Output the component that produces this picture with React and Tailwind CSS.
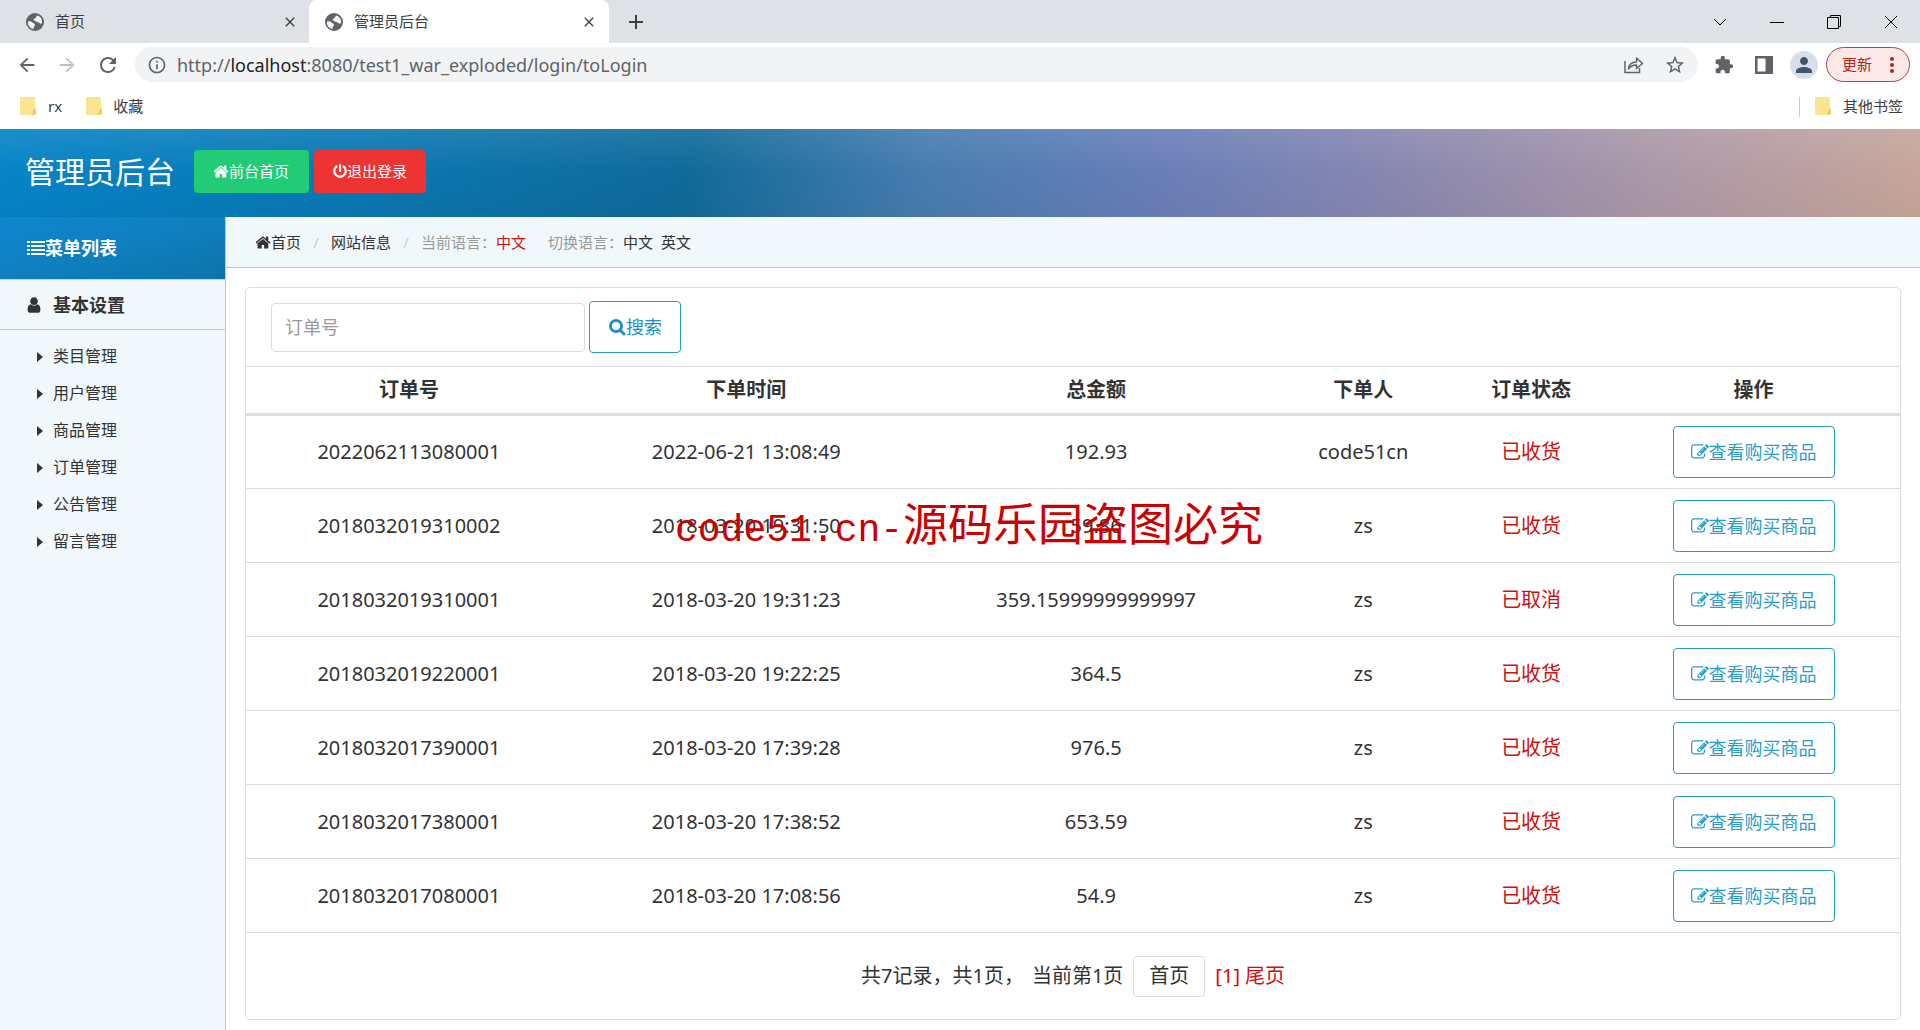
import React from "react";
import { FaPowerOff } from "react-icons/fa";
import { MdExtension, MdPerson, MdStarBorder, MdInfoOutline, MdRefresh, MdArrowBack, MdArrowForward, MdClose, MdAdd } from "react-icons/md";

const menu = ["类目管理", "用户管理", "商品管理", "订单管理", "公告管理", "留言管理"];

const columns = [
  ["订单号", "w-[19.7%]"],
  ["下单时间", "w-[21.1%]"],
  ["总金额", "w-[21.2%]"],
  ["下单人", "w-[11.1%]"],
  ["订单状态", "w-[9.2%]"],
  ["操作", "w-[17.7%]"],
];

const orders = [
  ["2022062113080001", "2022-06-21 13:08:49", "192.93", "code51cn", "已收货"],
  ["2018032019310002", "2018-03-20 19:31:50", "59.86", "zs", "已收货"],
  ["2018032019310001", "2018-03-20 19:31:23", "359.15999999999997", "zs", "已取消"],
  ["2018032019220001", "2018-03-20 19:22:25", "364.5", "zs", "已收货"],
  ["2018032017390001", "2018-03-20 17:39:28", "976.5", "zs", "已收货"],
  ["2018032017380001", "2018-03-20 17:38:52", "653.59", "zs", "已收货"],
  ["2018032017080001", "2018-03-20 17:08:56", "54.9", "zs", "已收货"],
];

function HomeIcon() {
  return (
    <svg className="size-[15px]" viewBox="96 96 1600 1600" fill="currentColor" aria-hidden="true">
      <path d="M1408 992v480q0 26-19 45t-45 19h-384v-384h-256v384h-384q-26 0-45-19t-19-45v-480q0-1 .5-3t.5-3l575-474 575 474q1 2 1 6zm223-69l-62 74q-8 9-21 11h-3q-13 0-21-7l-692-577-692 577q-12 8-24 7-13-2-21-11l-62-74q-8-10-7-23.5t11-21.5l719-599q32-26 76-26t76 26l244 204v-195q0-14 9-23t23-9h192q14 0 23 9t9 23v408l219 182q10 8 11 21.5t-7 23.5z" />
    </svg>
  );
}

function EditIcon() {
  return (
    <svg className="size-[18px]" viewBox="0 0 1792 1792" fill="currentColor" aria-hidden="true">
      <path d="M888 1184l116-116-152-152-116 116v56h96v96h56zm440-720q-16-16-33 1l-350 350q-17 17-1 33t33-1l350-350q17-17 1-33zm80 594v190q0 119-84.500 203.500t-203.500 84.500h-832q-119 0-203.500-84.500t-84.500-203.500v-832q0-119 84.500-203.500t203.500-84.500h832q63 0 117 25 15 7 18 23 3 17-9 29l-49 49q-14 14-32 8-23-6-45-6h-832q-66 0-113 47t-47 113v832q0 66 47 113t113 47h832q66 0 113-47t47-113v-126q0-13 9-22l64-64q15-15 35-7t20 29zm-96-738l288 288-672 672h-288v-288zm444 132l-92 92-288-288 92-92q28-28 68-28t68 28l152 152q28 28 28 68t-28 68z" />
    </svg>
  );
}

function UserIcon() {
  return (
    <svg className="size-4" viewBox="96 96 1600 1600" fill="currentColor" aria-hidden="true">
      <path d="M1536 1399q0 109-62.500 187t-150.500 78h-854q-88 0-150.500-78t-62.500-187q0-85 8.500-160.500t31.500-152 58.500-131 94-89 134.500-34.500q131 128 313 128t313-128q76 0 134.500 34.500t94 89 58.500 131 31.500 152 8.500 160.500zm-256-887q0 159-112.500 271.500t-271.500 112.500-271.500-112.500-112.500-271.500 112.500-271.500 271.500-112.500 271.500 112.500 112.500 271.500z" />
    </svg>
  );
}

function ListIcon() {
  return (
    <svg width="18" height="16" viewBox="0 0 18 16" fill="currentColor" aria-hidden="true">
      <path d="M0 1h3v2H0zM4 1h14v2H4zM0 5h3v2H0zM4 5h14v2H4zM0 9h3v2H0zM4 9h14v2H4zM0 13h3v2H0zM4 13h14v2H4z" />
    </svg>
  );
}

function SearchIcon() {
  return (
    <svg width="18" height="18" viewBox="0 0 18 18" fill="none" stroke="currentColor" aria-hidden="true">
      <circle cx="8" cy="8" r="5.5" strokeWidth="3" />
      <path d="M12 12l4 4" strokeWidth="3" strokeLinecap="round" />
    </svg>
  );
}

function Globe() {
  return (
    <svg width="18" height="18" viewBox="0 0 18 18" aria-hidden="true">
      <circle cx="9" cy="9" r="9" fill="#5f6368" />
      <path d="M2 8.500c2-.5 4 0 5 1.500 1 .3 2 .8 2 2s-1.500 1.500-1.500 3v1C4 15.500 1.500 12.500 2 8.500z" fill="#f3f4f6" />
      <path d="M11.500 2.500c3 1 4.800 3.500 4.600 7-.6 1.500-1.600 1.500-2.600.5-.8-1-2.500-.5-3.500-1.500-.8-1-2.500-.8-2.500-2 0-1 1.500-.8 2-1.500.8-1 .8-1.800 2-2.500z" fill="#f3f4f6" />
    </svg>
  );
}

function Folder() {
  return (
    <svg width="17" height="19" viewBox="0 0 17 19" aria-hidden="true">
      <rect x="0" y="0" width="15" height="18" rx="1" fill="#fde491" />
      <path d="M14 11l2 1v5l-2 1h-2z" fill="#f3cd5c" />
    </svg>
  );
}

function Tab({ title, active }) {
  return (
    <div className={active ? "flex w-[300px] items-center rounded-t-lg bg-white pl-4 pr-3" : "flex w-[309px] items-center pl-[26px] pr-[11px]"}>
      <Globe />
      <span className="ml-[11px] flex-1">{title}</span>
      <button aria-label="关闭标签页"><MdClose className="size-4 text-[#3c4043]" /></button>
    </div>
  );
}

function Browser() {
  return (
    <div className="text-[15px] text-[#3c4043]">
      <div className="flex h-[43px] bg-[#dee1e6]">
        <Tab title="首页" />
        <Tab title="管理员后台" active />
        <button className="ml-[15px]" aria-label="新标签页"><MdAdd className="size-6" /></button>
        <div className="ml-auto flex items-center pr-px text-black">
          <button className="flex w-[57px] justify-center" aria-label="搜索标签页">
            <svg width="14" height="14" viewBox="0 0 14 14" fill="none" stroke="currentColor"><path d="M1 4l6 6 6-6" /></svg>
          </button>
          <button className="flex w-[57px] justify-center" aria-label="最小化">
            <svg width="14" height="14" viewBox="0 0 14 14" stroke="currentColor"><path d="M0 7.5h14" /></svg>
          </button>
          <button className="flex w-[57px] justify-center" aria-label="还原">
            <svg width="14" height="14" viewBox="0 0 14 14" fill="none" stroke="currentColor"><path d="M.5 2.500h11v11H.5zM3.500 2.500v-2h10v11h-2" /></svg>
          </button>
          <button className="flex w-[57px] justify-center" aria-label="关闭">
            <svg width="14" height="14" viewBox="0 0 14 14" stroke="currentColor"><path d="M1 1l12 12M13 1L1 13" /></svg>
          </button>
        </div>
      </div>
      <div className="flex h-[45px] items-center bg-white pb-0.5 pl-4 pr-2.5">
        <button className="mr-[18px]" aria-label="后退"><MdArrowBack className="size-[22px] text-[#5f6368]" /></button>
        <button className="mr-[18px]" aria-label="前进"><MdArrowForward className="size-[22px] text-[#bdc1c6]" /></button>
        <button aria-label="重新加载"><MdRefresh className="size-6 text-[#5f6368]" /></button>
        <div className="ml-[15px] flex h-[35px] flex-1 items-center rounded-full bg-[#f1f3f4] pl-3 pr-3">
          <MdInfoOutline className="size-5 text-[#5f6368]" />
          <span className="ml-2.5 flex-1 text-lg text-[#5f6368]">
            http://<span className="text-[#202124]">localhost</span>:8080/test1_war_exploded/login/toLogin
          </span>
          <button className="mr-5" aria-label="分享">
            <svg width="20" height="20" viewBox="0 0 20 20" fill="none" stroke="#5f6368" strokeWidth="1.500">
              <path d="M1 6v11.500h14.500V13" />
              <path d="M4.500 14c.5-4.500 3-7 8-7V3l6 5.500-6 5V10c-3.500 0-6 1-8 4z" strokeLinejoin="round" />
            </svg>
          </button>
          <button aria-label="收藏"><MdStarBorder className="size-[22px] text-[#5f6368]" /></button>
        </div>
        <button className="ml-4" aria-label="扩展程序"><MdExtension className="size-5 text-[#5f6368]" /></button>
        <button className="ml-5" aria-label="侧边栏">
          <svg width="20" height="20" viewBox="0 0 20 20"><path d="M1 1h18v18H1zM3.500 3.500v13h8v-13z" fill="#5f6368" fillRule="evenodd" /></svg>
        </button>
        <button className="ml-4 flex size-7 items-center justify-center rounded-full bg-[#d9dfea]" aria-label="个人资料"><MdPerson className="size-6 text-[#44546a]" /></button>
        <button className="ml-2 flex h-[35px] items-center gap-[18px] rounded-full border border-[#b3404a] bg-[#fce8e6] pl-[15px] pr-[15px] text-[#b3261e]">
          更新
          <svg width="4" height="16" viewBox="0 0 4 16" fill="currentColor"><circle cx="2" cy="2" r="2" /><circle cx="2" cy="8" r="2" /><circle cx="2" cy="14" r="2" /></svg>
        </button>
      </div>
      <div className="flex h-[41px] items-center bg-white pb-1 pl-5 pr-[17px]">
        <a href="#rx" className="mr-6 flex items-center gap-[11px]"><Folder />rx</a>
        <a href="#fav" className="flex items-center gap-2.5"><Folder />收藏</a>
        <a href="#other" className="ml-auto flex items-center gap-[11px]"><span className="mr-1 h-5 w-px bg-[#c8cacd]" /><Folder />其他书签</a>
      </div>
    </div>
  );
}

function Sidebar() {
  return (
    <aside className="w-[226px] shrink-0 border-r border-[#b5cfd9] bg-[#f0f8fc] text-[#333]">
      <h2 className="flex h-[63px] items-center border-b border-[#a5dcf8] bg-linear-to-br from-[#1186cf] via-[#0f7fc0] to-[#0c74a8] pl-[27px] text-lg font-bold text-white">
        <ListIcon />菜单列表
      </h2>
      <h3 className="flex h-[50px] items-center gap-[11px] border-b border-[#bccbd3] pl-[26px] text-lg font-bold">
        <UserIcon />基本设置
      </h3>
      <ul className="pt-2">
        {menu.map((m) => (
          <li key={m}>
            <a href="#menu" className="flex items-center gap-2.5 pl-[37px] text-base leading-[37px]">
              <svg width="6" height="10" viewBox="0 0 6 10" fill="currentColor" aria-hidden="true"><path d="M0 0l6 5-6 5z" /></svg>
              {m}
            </a>
          </li>
        ))}
      </ul>
    </aside>
  );
}

export default function App() {
  return (
    <div className="relative flex min-h-screen flex-col bg-white font-['Noto_Sans','Noto_Sans_CJK_SC',sans-serif] text-[#333]">
      <Browser />
      <header className="flex h-[88px] items-center bg-[linear-gradient(180deg,#ffffff18,#ffffff00_50%,#00000008),linear-gradient(102deg,#0584c8_0%,#0a77b2_20%,#0f6a99_36%,#467cb0_48%,#687eb8_60%,#8a88b0_73%,#ac98a8_86%,#c8a69a_100%)] pb-1 pl-[25px]">
        <h1 className="mr-[19px] text-[30px] text-white">管理员后台</h1>
        <a href="#front" className="mr-[5px] flex h-[43px] items-center rounded bg-[#2c7] px-5 text-[15px] text-white"><HomeIcon />前台首页</a>
        <a href="#logout" className="flex h-[43px] items-center rounded bg-[#e33] px-[19px] text-[15px] text-white"><FaPowerOff className="size-[14px]" />退出登录</a>
      </header>
      <div className="flex flex-1">
        <Sidebar />
        <main className="min-w-0 flex-1">
          <nav className="flex h-[51px] items-center border-b border-[#c0c8cc] bg-[#f0f8fc] pl-[30px] text-[15px]">
            <a href="#home" className="flex items-center"><HomeIcon />首页</a>
            <span className="mx-[11px] w-2 text-center text-[#ccc]">/</span>
            <a href="#site">网站信息</a>
            <span className="mx-[11px] w-2 text-center text-[#ccc]">/</span>
            <span className="text-[#999]">当前语言：<span className="text-[#c11]">中文</span></span>
            <span className="ml-[22px] text-[#999]">切换语言：</span>
            <a href="#zh">中文</a>
            <a href="#en" className="ml-2">英文</a>
          </nav>
          <section className="mx-[19px] mt-[19px] rounded-[5px] border border-[#ddd] bg-white">
            <form className="flex h-[78px] items-center pl-[25px]">
              <input aria-label="订单号" placeholder="订单号" className="h-[49px] w-[314px] rounded border border-[#ddd] px-[13px] text-lg placeholder:text-[#999]" />
              <button type="button" className="ml-1 flex h-[52px] items-center rounded border border-[#2a9fb4] px-[18px] text-lg text-[#2090cc]"><SearchIcon />搜索</button>
            </form>
            <table className="w-full table-fixed text-center text-xl">
              <thead>
                <tr className="h-[48px] border-b-3 border-t border-[#ddd]">
                  {columns.map(([name, width]) => <th key={name} className={width}>{name}</th>)}
                </tr>
              </thead>
              <tbody>
                {orders.map(([id, time, sum, who, state]) => (
                  <tr key={id} className="h-[74px] border-b border-[#ddd]">
                    <td>{id}</td>
                    <td>{time}</td>
                    <td>{sum}</td>
                    <td>{who}</td>
                    <td className="text-[#c11]">{state}</td>
                    <td>
                      <a href="#goods" className="inline-flex h-[52px] items-center rounded border border-[#2a9fb4] px-[17px] align-middle text-lg text-[#2b9dcc]"><EditIcon />查看购买商品</a>
                    </td>
                  </tr>
                ))}
              </tbody>
            </table>
            <div className="flex h-[86px] items-center justify-center text-xl">
              <span>共7记录，共1页，</span>
              <span className="ml-2">当前第1页</span>
              <a href="#first" className="mx-[10px] flex h-[41px] items-center rounded border border-[#ddd] px-[15px]">首页</a>
              <a href="#p1" className="text-[#c11]">[1]</a>
              <a href="#last" className="ml-[5px] text-[#c11]">尾页</a>
            </div>
          </section>
        </main>
      </div>
      <div className="pointer-events-none absolute left-[675px] top-[494px] flex items-baseline leading-[60px] text-[#c00]">
        <span className="font-['Liberation_Mono',monospace] text-[38px]">code51.cn-</span>
        <span className="text-[45px]">源码乐园盗图必究</span>
      </div>
    </div>
  );
}
